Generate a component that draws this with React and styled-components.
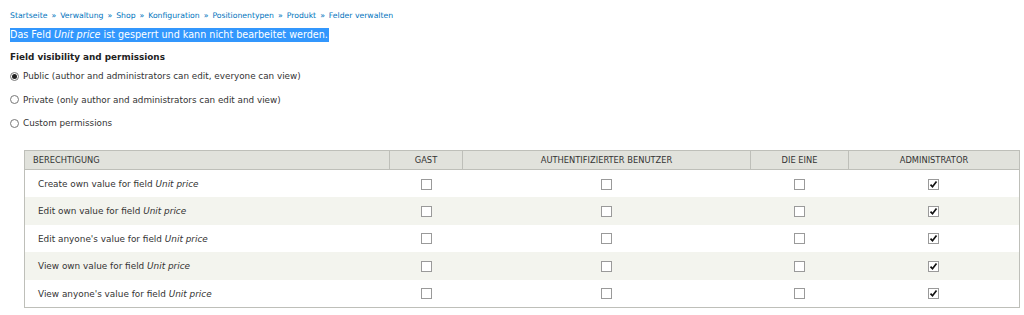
import React from "react";
import styled, { createGlobalStyle } from "styled-components";

const Global = createGlobalStyle`
  html, body { margin: 0; padding: 0; background: #fff; }
  body { font-family: "DejaVu Sans", Verdana, sans-serif; color: #333; }
`;

const Page = styled.div`
  padding: 9px 5px 0 10px;
  display: flex;
  flex-direction: column;
`;

const Breadcrumb = styled.nav`
  font-size: 7.7px;
  line-height: 14px;
  color: #0074bd;
  display: flex;
  gap: 4px;
`;

const Crumb = styled.a`
  color: #0074bd;
  text-decoration: none;
`;

const Sep = styled.span`
  color: #0074bd;
`;

const Selected = styled.div`
  margin-top: 5px;
  align-self: flex-start;
  background: #3297fd;
  color: #fff;
  font-size: 9.6px;
  line-height: 14px;
  padding: 0 1px 0 0;
`;

const Heading = styled.h3`
  margin: 8px 0 0;
  font-size: 8.85px;
  line-height: 14px;
  font-weight: bold;
  color: #222;
`;

const RadioGroup = styled.div`
  display: flex;
  flex-direction: column;
  gap: 9.5px;
  margin-top: 5px;
`;

const RadioRow = styled.label`
  display: flex;
  align-items: center;
  gap: 4px;
  font-size: 8.8px;
  line-height: 14px;
  color: #333;
`;

const RadioDot = styled.span`
  width: 9px;
  height: 9px;
  border-radius: 50%;
  border: 1px solid #777;
  box-sizing: border-box;
  display: inline-flex;
  align-items: center;
  justify-content: center;
  background: #fff;
  &::after {
    content: "";
    width: 5px;
    height: 5px;
    border-radius: 50%;
    background: ${(p) => (p.$checked ? "#222" : "transparent")};
  }
`;

const Table = styled.table`
  margin: 20px 0 0 14px;
  width: 995px;
  table-layout: fixed;
  border-collapse: collapse;
  border: 1px solid #bebfb9;
`;

const Th = styled.th`
  background: #e1e2dc;
  color: #333;
  font-size: 8.3px;
  font-weight: normal;
  text-transform: uppercase;
  text-align: ${(p) => (p.$left ? "left" : "center")};
  padding: 0 ${(p) => (p.$left ? "8px" : "0")};
  height: 19px;
  border-left: 1px solid #bebfb9;
  border-bottom: 1px solid #bebfb9;
  width: ${(p) => p.$w}px;
  box-sizing: border-box;
`;

const Tr = styled.tr`
  background: ${(p) => (p.$odd ? "#f3f4ee" : "#fff")};
`;

const Td = styled.td`
  height: 27.5px;
  box-sizing: border-box;
  padding: 1px ${(p) => (p.$left ? "13px" : "0")} 0;
  text-align: ${(p) => (p.$left ? "left" : "center")};
  vertical-align: middle;
  color: #333;
  font-size: 8.9px;
  line-height: 10px;
`;

const Box = styled.span`
  display: inline-block;
  width: 11px;
  height: 11px;
  box-sizing: border-box;
  border: 1px solid #9a9a9a;
  background: #fff;
  vertical-align: middle;
  position: relative;
`;

const Check = () => (
  <svg width="9" height="9" viewBox="0 0 9 9" style={{ position: "absolute", left: 0, top: 0 }}>
    <path d="M1.5 4.6 L3.5 6.8 L7.5 1.6" stroke="#111" strokeWidth="1.7" fill="none" />
  </svg>
);

const CheckBox = ({ checked }) => <Box>{checked && <Check />}</Box>;

const crumbs = ["Startseite", "Verwaltung", "Shop", "Konfiguration", "Positionentypen", "Produkt", "Felder verwalten"];
const cols = [
  { label: "Berechtigung", w: 365, left: true },
  { label: "Gast", w: 73 },
  { label: "Authentifizierter Benutzer", w: 288 },
  { label: "Die Eine", w: 98 },
  { label: "Administrator", w: 171 },
];
const perms = [
  "Create own value for field",
  "Edit own value for field",
  "Edit anyone's value for field",
  "View own value for field",
  "View anyone's value for field",
];

export default function App() {
  return (
    <>
      <Global />
      <Page>
        <Breadcrumb>
          {crumbs.map((c, i) => (
            <React.Fragment key={c}>
              {i > 0 && <Sep>»</Sep>}
              <Crumb href="#">{c}</Crumb>
            </React.Fragment>
          ))}
        </Breadcrumb>
        <Selected>
          Das Feld <em>Unit price</em> ist gesperrt und kann nicht bearbeitet werden.
        </Selected>
        <Heading>Field visibility and permissions</Heading>
        <RadioGroup>
          <RadioRow><RadioDot $checked />Public (author and administrators can edit, everyone can view)</RadioRow>
          <RadioRow><RadioDot />Private (only author and administrators can edit and view)</RadioRow>
          <RadioRow><RadioDot />Custom permissions</RadioRow>
        </RadioGroup>
        <Table>
          <thead>
            <tr>
              {cols.map((c) => (
                <Th key={c.label} $w={c.w} $left={c.left}>{c.label}</Th>
              ))}
            </tr>
          </thead>
          <tbody>
            {perms.map((p, i) => (
              <Tr key={p} $odd={i % 2 === 1}>
                <Td $left>{p} <em>Unit price</em></Td>
                <Td><CheckBox /></Td>
                <Td><CheckBox /></Td>
                <Td><CheckBox /></Td>
                <Td><CheckBox checked /></Td>
              </Tr>
            ))}
          </tbody>
        </Table>
      </Page>
    </>
  );
}
